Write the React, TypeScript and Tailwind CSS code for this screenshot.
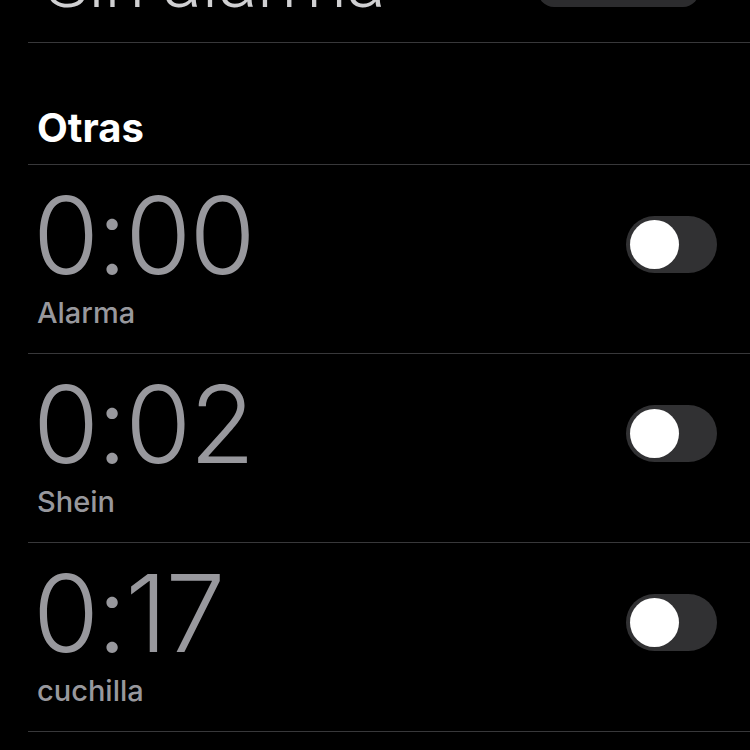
const alarms = [
  { time: "0:00", label: "Alarma" },
  { time: "0:02", label: "Shein" },
  { time: "0:17", label: "cuchilla" },
]

const Toggle = () => (
  <div className="mt-[51px] flex h-[57px] w-[91px] items-center rounded-full bg-[#313133] px-[4px]">
    <div className="h-[49px] w-[49px] rounded-full bg-white" />
  </div>
)

export default function App() {
  return (
    <div className="h-[750px] w-[750px] overflow-hidden bg-black pl-[28px] font-['Inter','Liberation_Sans',sans-serif]">
      <div className="flex h-[43px] items-start justify-between overflow-hidden border-b border-[#38383a] pr-[51px]">
        <div className="-mt-[54px] ml-[17px] font-['Roboto',sans-serif] text-[73px] font-light leading-none text-[#d0d0d2]">
          Sin alarma
        </div>
        <div className="-mt-[30px] h-[37px] w-[161px] rounded-[16px] bg-[#2c2c2e]" />
      </div>
      <div className="h-[122px] border-b border-[#38383a] pl-[9px] pt-[65px] text-[40px] font-bold leading-none text-white">
        Otras
      </div>
      {alarms.map((alarm) => (
        <div
          key={alarm.time}
          className="flex h-[189px] items-start justify-between border-b border-[#38383a] pl-[9px] pr-[33px]"
        >
          <div className="flex flex-col pt-[17px]">
            <div className="-ml-[4px] text-[107px] font-light leading-none tracking-[-2px] text-[#98989d]">
              {alarm.time}
            </div>
            <div className="mt-[9px] text-[29px] font-medium leading-none text-[#98989d]">
              {alarm.label}
            </div>
          </div>
          <Toggle />
        </div>
      ))}
    </div>
  )
}
